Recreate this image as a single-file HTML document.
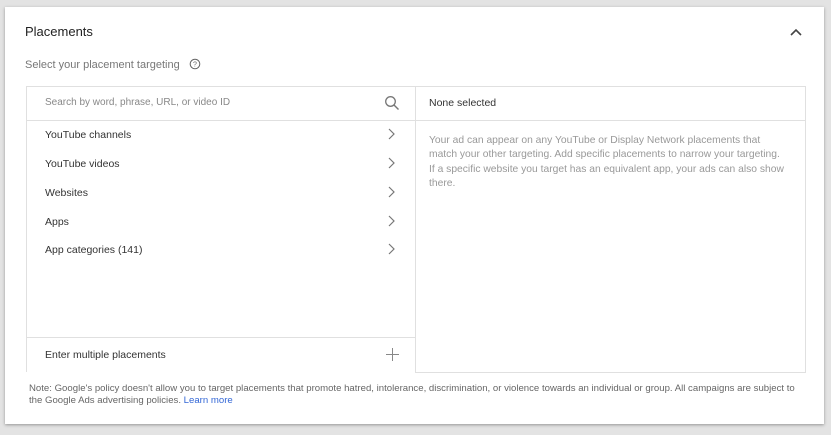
<!DOCTYPE html>
<html><head><style>
body{margin:0;width:831px;height:435px;background:#e3e3e3;font-family:"Liberation Sans",sans-serif;position:relative;overflow:hidden}
.card{position:absolute;left:5px;top:7px;width:819px;height:417px;background:#fff;box-shadow:0 1px 3px rgba(0,0,0,.35)}
.a{position:absolute;white-space:nowrap}
.t{font-size:10.5px;color:#333}
.line{position:absolute;background:#e0e0e0}
</style></head><body>
<div class="card"></div>
<div class="a" style="left:25px;top:24px;font-size:13px;color:#222">Placements</div>
<svg class="a" style="left:790px;top:28px" width="12" height="8"><path d="M1 7L6 2L11 7" fill="none" stroke="#444" stroke-width="1.6"/></svg>
<div class="a" style="left:25px;top:59px;font-size:11px;color:#777">Select your placement targeting</div>
<svg class="a" style="left:189px;top:58px" width="12" height="12"><circle cx="6" cy="6" r="4.8" fill="none" stroke="#666" stroke-width="1"/><text x="6" y="8.6" font-size="7" text-anchor="middle" fill="#666" font-family="Liberation Sans">?</text></svg>
<div class="line" style="left:26px;top:86px;width:780px;height:1px"></div>
<div class="line" style="left:26px;top:86px;width:1px;height:286px"></div>
<div class="line" style="left:415px;top:86px;width:1px;height:286px"></div>
<div class="line" style="left:805px;top:86px;width:1px;height:286px"></div>
<div class="line" style="left:415px;top:372px;width:391px;height:1px"></div>
<div class="line" style="left:26px;top:120px;width:780px;height:1px"></div>
<div class="line" style="left:26px;top:337px;width:389px;height:1px"></div>
<div class="a" style="left:45px;top:97px;font-size:10px;color:#888">Search by word, phrase, URL, or video ID</div>
<svg class="a" style="left:384px;top:95px" width="16" height="16"><circle cx="6.5" cy="6.5" r="4.8" fill="none" stroke="#777" stroke-width="1.3"/><path d="M10 10L14.5 14.5" stroke="#777" stroke-width="1.4"/></svg>
<div class="a t" style="left:45px;top:129px">YouTube channels</div>
<div class="a t" style="left:45px;top:158px">YouTube videos</div>
<div class="a t" style="left:45px;top:187px">Websites</div>
<div class="a t" style="left:45px;top:216px">Apps</div>
<div class="a t" style="left:45px;top:244px">App categories (141)</div>
<svg class="a" style="left:386px;top:128px" width="10" height="140" fill="none" stroke="#777" stroke-width="1.2"><path d="M3 1L8 6L3 11"/><path d="M3 30L8 35L3 40"/><path d="M3 59L8 64L3 69"/><path d="M3 88L8 93L3 98"/><path d="M3 116L8 121L3 126"/></svg>
<div class="a t" style="left:45px;top:349px">Enter multiple placements</div>
<svg class="a" style="left:386px;top:348px" width="13" height="13"><path d="M6.5 0V13M0 6.5H13" stroke="#888" stroke-width="1"/></svg>
<div class="a" style="left:429px;top:97px;font-size:10.5px;color:#333">None selected</div>
<div class="a" style="left:429px;top:134px;font-size:10.3px;line-height:14.3px;color:#999">Your ad can appear on any YouTube or Display Network placements that<br>match your other targeting. Add specific placements to narrow your targeting.<br>If a specific website you target has an equivalent app, your ads can also show<br>there.</div>
<div class="a" style="left:29px;top:383px;font-size:9.6px;line-height:12px;color:#666">Note: Google's policy doesn't allow you to target placements that promote hatred, intolerance, discrimination, or violence towards an individual or group. All campaigns are subject to<br>the Google Ads advertising policies. <span style="color:#3367d6">Learn more</span></div>
</body></html>
